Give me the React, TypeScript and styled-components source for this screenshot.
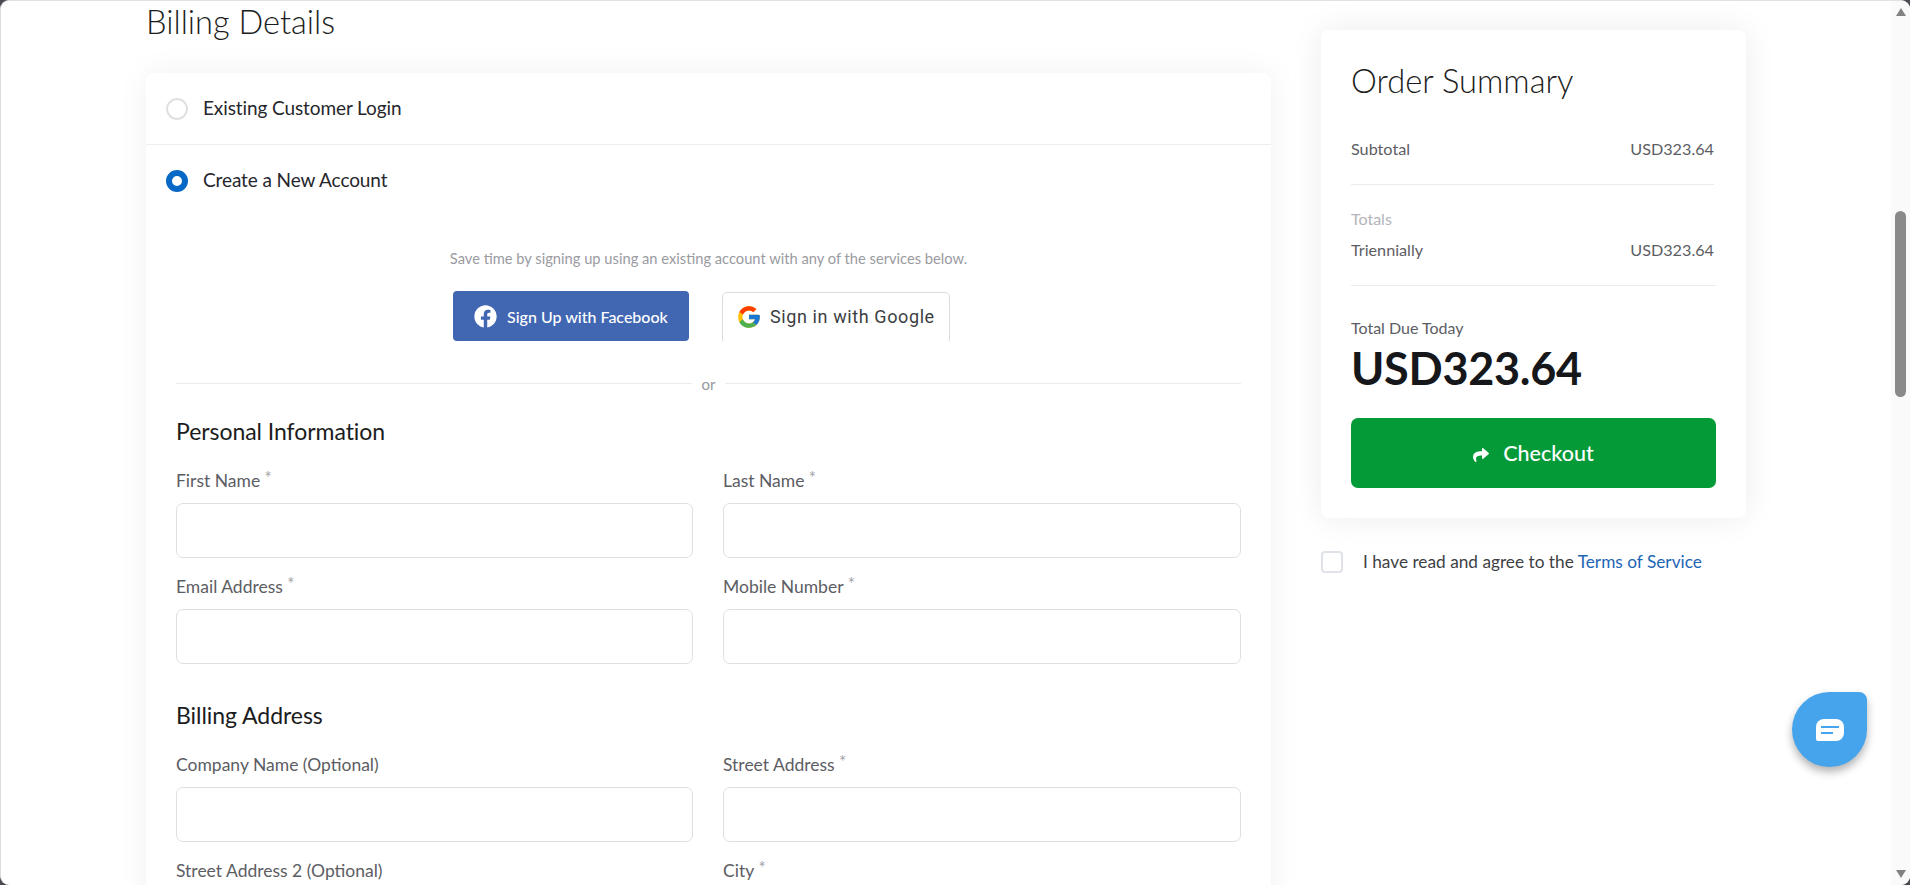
import React from 'react';
import styled, { createGlobalStyle } from 'styled-components';
import { FaFacebook, FaShare } from 'react-icons/fa';
import { FcGoogle } from 'react-icons/fc';

const GlobalStyle = createGlobalStyle`
  html, body {
    margin: 0;
    height: 100%;
    overflow: hidden;
    background: #4a4a50;
  }
  * {
    box-sizing: border-box;
  }
`;

interface IField {
  label: string;
  required?: boolean;
}

const personalFields: IField[] = [
  { label: 'First Name', required: true },
  { label: 'Last Name', required: true },
  { label: 'Email Address', required: true },
  { label: 'Mobile Number', required: true },
];

const addressFields: IField[] = [
  { label: 'Company Name (Optional)' },
  { label: 'Street Address', required: true },
  { label: 'Street Address 2 (Optional)' },
  { label: 'City', required: true },
];

const FieldGrid: React.FC<{ fields: IField[] }> = ({ fields }) => (
  <Grid>
    {fields.map((field) => (
      <Field key={field.label}>
        <Label>
          {field.label}
          {field.required && <Star> *</Star>}
        </Label>
        <Input type="text" />
      </Field>
    ))}
  </Grid>
);

const App: React.FC = () => {
  return (
    <Frame>
      <GlobalStyle />
      <Page>
        <Main>
          <Title>Billing Details</Title>
          <Card>
            <RadioRow $divided>
              <Radio />
              <RadioText>Existing Customer Login</RadioText>
            </RadioRow>
            <RadioRow>
              <Radio $checked />
              <RadioText>Create a New Account</RadioText>
            </RadioRow>
            <CardBody>
              <Hint>Save time by signing up using an existing account with any of the services below.</Hint>
              <SocialRow>
                <FacebookButton>
                  <FaFacebook size={23} />
                  Sign Up with Facebook
                </FacebookButton>
                <GoogleClip>
                  <GoogleButton>
                    <FcGoogle size={26} />
                    Sign in with Google
                  </GoogleButton>
                </GoogleClip>
              </SocialRow>
              <OrRow>
                <OrLine />
                <OrText>or</OrText>
                <OrLine />
              </OrRow>
              <SectionTitle>Personal Information</SectionTitle>
              <FieldGrid fields={personalFields} />
              <SectionTitle $spaced>Billing Address</SectionTitle>
              <FieldGrid fields={addressFields} />
            </CardBody>
          </Card>
        </Main>
        <Aside>
          <SummaryCard>
            <SummaryTitle>Order Summary</SummaryTitle>
            <SummaryRow $top={34} $inset>
              <span>Subtotal</span>
              <span>USD323.64</span>
            </SummaryRow>
            <Rule $inset />
            <TotalsLabel>Totals</TotalsLabel>
            <SummaryRow $top={9} $inset>
              <span>Triennially</span>
              <span>USD323.64</span>
            </SummaryRow>
            <Rule />
            <DueLabel>Total Due Today</DueLabel>
            <DueAmount>USD323.64</DueAmount>
            <CheckoutButton>
              <FaShare size={16} />
              Checkout
            </CheckoutButton>
          </SummaryCard>
          <Terms>
            <Checkbox />
            <span>
              I have read and agree to the <TermsLink>Terms of Service</TermsLink>
            </span>
          </Terms>
        </Aside>
      </Page>
      <ScrollRail>
        <ArrowUp />
        <ThumbSpace>
          <Thumb />
        </ThumbSpace>
        <ArrowDown />
      </ScrollRail>
      <ChatBubble>
        <svg width="28" height="22" viewBox="0 0 28 22">
          <path d="M8 0h12a8 8 0 0 1 8 8v6a8 8 0 0 1-8 8H2a2 2 0 0 1-2-2V8a8 8 0 0 1 8-8z" fill="#fff" />
          <rect x="5" y="7" width="18" height="2" fill="#45a4ec" />
          <rect x="5" y="13" width="12" height="2" fill="#45a4ec" />
        </svg>
      </ChatBubble>
    </Frame>
  );
};

// Styled Components
const Frame = styled.div`
  position: relative;
  display: flex;
  width: 1910px;
  height: 885px;
  overflow: hidden;
  background: #fff;
  border-top: 1px solid #e2e2e2;
  border-left: 1px solid #dcdcdc;
  border-radius: 9px;
  font-family: 'Lato', 'Liberation Sans', sans-serif;
`;

const Page = styled.div`
  flex: 1;
  display: flex;
  align-items: flex-start;
  gap: 50px;
  padding: 1px 0 0 145px;
  min-width: 0;
`;

const Main = styled.div`
  width: 1125px;
  flex-shrink: 0;
`;

const Title = styled.h1`
  margin: 0 0 31px;
  font-size: 32.6px;
  line-height: 40px;
  font-weight: 300;
  color: #1b1c20;
`;

const Card = styled.div`
  background: #fff;
  border-radius: 8px 8px 0 0;
  box-shadow: 0 0 32px rgba(0, 0, 0, 0.06);
`;

const RadioRow = styled.div<{ $divided?: boolean }>`
  display: flex;
  align-items: center;
  gap: 15px;
  height: ${({ $divided }) => ($divided ? '72px' : '71px')};
  padding-left: 20px;
  border-bottom: ${({ $divided }) => ($divided ? '1px solid #eeeeef' : 'none')};
`;

const Radio = styled.span<{ $checked?: boolean }>`
  width: 22px;
  height: 22px;
  border-radius: 50%;
  background: #fff;
  border: ${({ $checked }) => ($checked ? '6px solid #0868c6' : '2px solid #e0e0e2')};
`;

const RadioText = styled.span`
  margin-bottom: 2px;
  font-size: 19px;
  letter-spacing: -0.1px;
  color: #26272c;
`;

const CardBody = styled.div`
  padding: 32px 30px 0;
`;

const Hint = styled.p`
  margin: 0;
  text-align: center;
  font-size: 14.7px;
  line-height: 20px;
  color: #9a9ba1;
`;

const SocialRow = styled.div`
  display: flex;
  align-items: flex-start;
  gap: 33px;
  margin: 23px 0 0 277px;
`;

const FacebookButton = styled.button`
  display: flex;
  align-items: center;
  gap: 10px;
  width: 236px;
  height: 50px;
  padding: 0 0 0 21px;
  border: none;
  border-radius: 4px;
  background: #4267b2;
  color: #fff;
  font-family: 'Lato', sans-serif;
  font-size: 16px;
  font-weight: 500;
`;

const GoogleClip = styled.div`
  height: 49px;
  margin-top: 1px;
  overflow: hidden;
`;

const GoogleButton = styled.button`
  display: flex;
  align-items: center;
  gap: 8px;
  width: 228px;
  height: 52px;
  padding: 0 0 3px 13px;
  border: 1px solid #dadce0;
  border-radius: 5px;
  background: #fff;
  color: #3c4043;
  font-family: 'Roboto', sans-serif;
  font-size: 18px;
  font-weight: 400;
  letter-spacing: 0.6px;
  white-space: nowrap;
`;

const OrRow = styled.div`
  display: flex;
  align-items: center;
  gap: 10px;
  margin-top: 32px;
  height: 20px;
`;

const OrLine = styled.div`
  flex: 1;
  height: 1px;
  background: #ebebec;
`;

const OrText = styled.span`
  padding-top: 2px;
  font-size: 15px;
  line-height: 20px;
  color: #96979d;
`;

const SectionTitle = styled.h2<{ $spaced?: boolean }>`
  margin: ${({ $spaced }) => ($spaced ? '36px' : '23px')} 0 0;
  font-size: 23px;
  line-height: 30px;
  font-weight: 400;
  letter-spacing: -0.05px;
  color: #1b1c20;
`;

const Grid = styled.div`
  display: grid;
  grid-template-columns: 517px 518px;
  column-gap: 30px;
  row-gap: 17px;
  margin-top: 23px;
`;

const Field = styled.div`
  display: flex;
  flex-direction: column;
`;

const Label = styled.label`
  font-size: 17.5px;
  line-height: 24px;
  margin-bottom: 10px;
  color: #5c5d63;
`;

const Star = styled.span`
  font-size: 17px;
  line-height: 0;
  vertical-align: 3px;
  color: #a2a3a8;
`;

const Input = styled.input`
  height: 55px;
  width: 100%;
  border: 1px solid #dedfe2;
  border-radius: 7px;
  background: #fff;
  outline: none;
`;

const Aside = styled.div`
  width: 425px;
  flex-shrink: 0;
  padding-top: 28px;
`;

const SummaryCard = styled.div`
  padding: 29px 30px 30px;
  height: 488px;
  background: #fff;
  border-radius: 8px;
  box-shadow: 0 0 32px rgba(0, 0, 0, 0.08);
`;

const SummaryTitle = styled.h2`
  margin: 0;
  font-size: 32.7px;
  line-height: 44px;
  font-weight: 300;
  color: #1b1c20;
`;

const SummaryRow = styled.div<{ $top: number; $inset?: boolean }>`
  display: flex;
  justify-content: space-between;
  margin-top: ${({ $top }) => $top}px;
  padding-right: ${({ $inset }) => ($inset ? '2px' : '0')};
  font-size: 16.2px;
  line-height: 24px;
  color: #5c5d63;
`;

const Rule = styled.div<{ $inset?: boolean }>`
  height: 1px;
  margin: 23px ${({ $inset }) => ($inset ? '2px' : '0')} 0 0;
  background: #ebebec;
`;

const TotalsLabel = styled.div`
  margin-top: 24px;
  font-size: 16px;
  line-height: 20px;
  color: #b3b4b9;
`;

const DueLabel = styled.div`
  margin-top: 32px;
  font-size: 16px;
  line-height: 20px;
  color: #5c5d63;
`;

const DueAmount = styled.div`
  margin-top: 5px;
  font-size: 45px;
  line-height: 50px;
  font-weight: 700;
  letter-spacing: -0.3px;
  color: #16171b;
`;

const CheckoutButton = styled.button`
  display: flex;
  align-items: center;
  justify-content: center;
  gap: 14px;
  width: 100%;
  height: 70px;
  margin-top: 25px;
  border: none;
  border-radius: 7px;
  background: #059a38;
  color: #fff;
  font-family: 'Lato', sans-serif;
  font-size: 21.5px;
  font-weight: 500;

  svg {
    margin-top: 3px;
  }
`;

const Terms = styled.div`
  display: flex;
  align-items: center;
  gap: 20px;
  margin-top: 33px;
  font-size: 17.25px;
  line-height: 22px;
  color: #3e3f44;
`;

const Checkbox = styled.span`
  width: 22px;
  height: 22px;
  border: 2px solid #e0e2ea;
  border-radius: 4px;
  background: #fff;
`;

const TermsLink = styled.a`
  color: #1b66b5;
`;

const ScrollRail = styled.div`
  display: flex;
  flex-direction: column;
  align-items: center;
  width: 19px;
  height: 100%;
  background: #fafafa;
  padding: 7px 0 7px;
`;

const ArrowUp = styled.div`
  width: 0;
  height: 0;
  border-left: 5px solid transparent;
  border-right: 5px solid transparent;
  border-bottom: 8px solid #828282;
`;

const ArrowDown = styled.div`
  width: 0;
  height: 0;
  border-left: 5px solid transparent;
  border-right: 5px solid transparent;
  border-top: 8px solid #828282;
`;

const ThumbSpace = styled.div`
  flex: 1;
  padding-top: 195px;
`;

const Thumb = styled.div`
  width: 11px;
  height: 186px;
  border-radius: 6px;
  background: #8a8a8a;
`;

const ChatBubble = styled.div`
  position: absolute;
  left: 1791px;
  top: 691px;
  display: flex;
  align-items: center;
  justify-content: center;
  width: 75px;
  height: 75px;
  border-radius: 50% 8px 50% 50%;
  background: #45a4ec;
  box-shadow: 0 5px 8px rgba(0, 0, 0, 0.3);
`;

export default App;
